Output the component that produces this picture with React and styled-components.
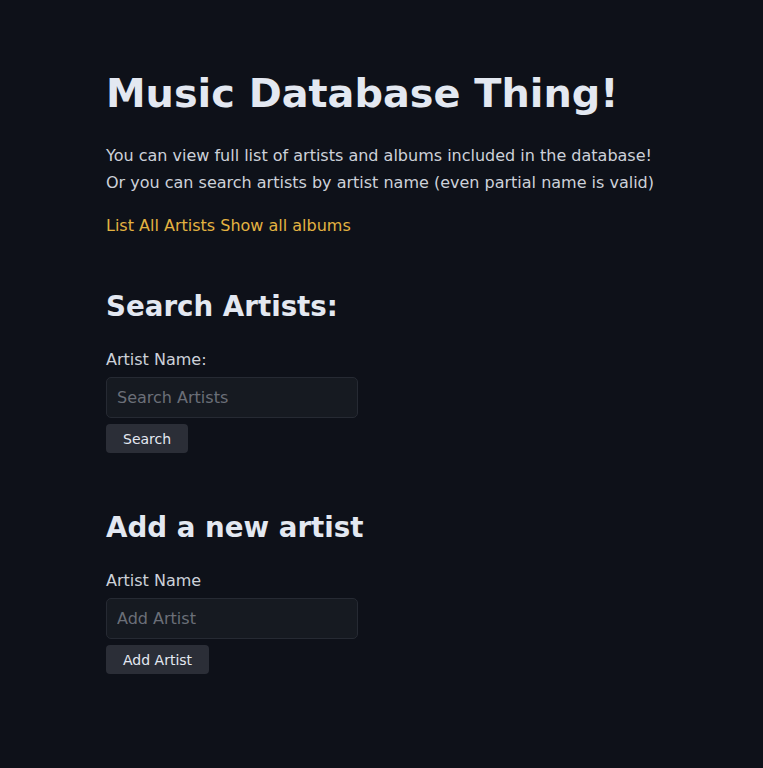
import React from 'react';
import styled, { createGlobalStyle } from 'styled-components';

const GlobalStyle = createGlobalStyle`
  html, body {
    margin: 0;
    padding: 0;
    background-color: #0e1119;
  }
  body {
    font-family: 'DejaVu Sans', sans-serif;
    color: #d4d7de;
  }
`;

const Page = styled.main`
  min-height: 100vh;
  padding: 68px 106px 60px;
  box-sizing: border-box;
  background-color: #0e1119;
`;

const Title = styled.h1`
  margin: 0 0 24px;
  font-size: 39.8px;
  line-height: 50px;
  font-weight: bold;
  color: #e3e8f1;
`;

const Intro = styled.p`
  margin: 0;
  font-size: 16px;
  line-height: 27px;
  color: #cdd1d9;
`;

const Links = styled.div`
  margin-top: 16px;
  font-size: 16px;
  line-height: 27px;
`;

const Link = styled.a`
  color: #e3b341;
  text-decoration: none;
  cursor: pointer;
`;

const Section = styled.section`
  margin-top: ${(p) => p.$top}px;
  display: flex;
  flex-direction: column;
  align-items: flex-start;
`;

const Heading = styled.h2`
  margin: 0 0 24px;
  font-size: 27.7px;
  line-height: 36px;
  font-weight: bold;
  color: #e3e8f1;
`;

const Label = styled.label`
  font-size: 16px;
  line-height: 22px;
  color: #cdd1d9;
  margin-bottom: 6px;
`;

const Input = styled.input`
  width: 252px;
  height: 41px;
  box-sizing: border-box;
  padding: 0 10px;
  border: 1px solid #262a33;
  border-radius: 5px;
  background-color: #161a21;
  color: #d0d4dc;
  font-family: 'DejaVu Sans', sans-serif;
  font-size: 16px;
  outline: none;

  &::placeholder {
    color: #6b6f78;
  }
`;

const Button = styled.button`
  margin-top: 6px;
  height: 29px;
  padding: 0 17px;
  border: none;
  border-radius: 4px;
  background-color: #2b2e37;
  color: #e3e8f1;
  font-family: 'DejaVu Sans', sans-serif;
  font-size: 14px;
  cursor: pointer;
`;

const App = () => (
  <>
    <GlobalStyle />
    <Page>
      <Title>Music Database Thing!</Title>
      <Intro>
        You can view full list of artists and albums included in the database!
        <br />
        Or you can search artists by artist name (even partial name is valid)
      </Intro>
      <Links>
        <Link>List All Artists</Link> <Link>Show all albums</Link>
      </Links>
      <Section $top={50}>
        <Heading>Search Artists:</Heading>
        <Label>Artist Name:</Label>
        <Input placeholder="Search Artists" />
        <Button>Search</Button>
      </Section>
      <Section $top={57}>
        <Heading>Add a new artist</Heading>
        <Label>Artist Name</Label>
        <Input placeholder="Add Artist" />
        <Button>Add Artist</Button>
      </Section>
    </Page>
  </>
);

export default App;
